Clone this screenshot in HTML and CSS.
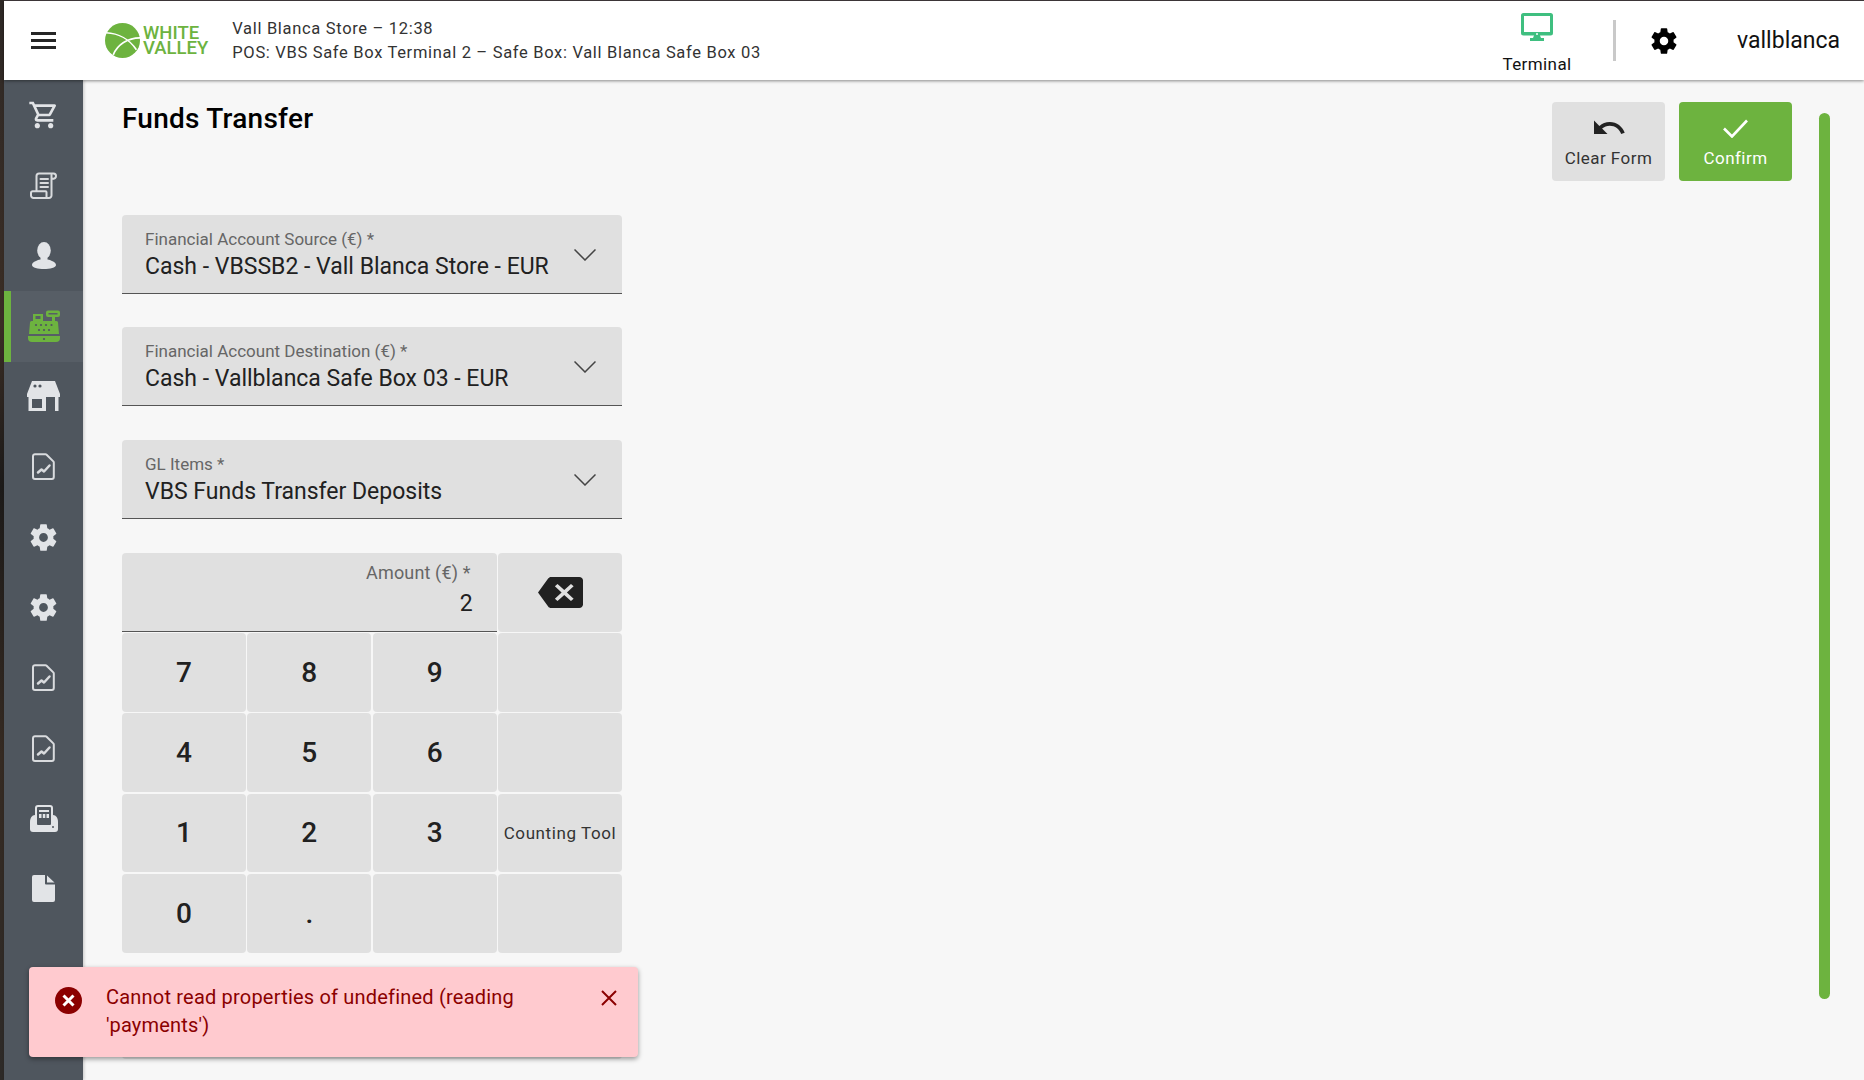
FILE: index.html
```html
<!DOCTYPE html>
<html lang="en">
<head>
<meta charset="utf-8">
<title>Funds Transfer</title>
<link rel="stylesheet" href="styles.css">
</head>
<body>
<svg class="defs" aria-hidden="true">
  <symbol id="i-cart" viewBox="0 0 24 24"><path d="M15.55 13c.75 0 1.41-.41 1.75-1.03l3.58-6.49A.996.996 0 0 0 20.01 4H5.21l-.94-2H1v2h2l3.6 7.59-1.35 2.44C4.52 15.37 5.48 17 7 17h12v-2H7l1.1-2h7.45zM6.16 6h12.15l-2.76 5H8.53L6.16 6zM7 18c-1.1 0-1.99.9-1.99 2S5.9 22 7 22s2-.9 2-2-.9-2-2-2zm10 0c-1.1 0-1.99.9-1.99 2s.89 2 1.99 2 2-.9 2-2-.9-2-2-2z"/></symbol>
  <symbol id="i-gear" viewBox="0 0 24 24"><path d="M19.14 12.94c.04-.3.06-.61.06-.94 0-.32-.02-.64-.07-.94l2.03-1.58a.49.49 0 0 0 .12-.61l-1.92-3.32a.488.488 0 0 0-.59-.22l-2.39.96c-.5-.38-1.03-.7-1.62-.94l-.36-2.54a.484.484 0 0 0-.48-.41h-3.84c-.24 0-.43.17-.47.41l-.36 2.54c-.59.24-1.13.57-1.62.94l-2.39-.96c-.22-.08-.47 0-.59.22L2.74 8.87c-.12.21-.08.47.12.61l2.03 1.58c-.05.3-.09.63-.09.94s.02.64.07.94l-2.03 1.58a.49.49 0 0 0-.12.61l1.92 3.32c.12.22.37.29.59.22l2.39-.96c.5.38 1.03.7 1.62.94l.36 2.54c.05.24.24.41.48.41h3.84c.24 0 .44-.17.47-.41l.36-2.54c.59-.24 1.13-.56 1.62-.94l2.39.96c.22.08.47 0 .59-.22l1.92-3.32c.12-.22.07-.47-.12-.61l-2.01-1.58zM12 15.2c-1.76 0-3.2-1.44-3.2-3.2s1.44-3.2 3.2-3.2 3.2 1.44 3.2 3.2-1.44 3.2-3.2 3.2z"/></symbol>
  <symbol id="i-doc" viewBox="0 0 23 27"><path class="ln" d="M3 1.200h10.500c.4 0 .8.2 1.100.5l6.700 6.700c.3.3.5.7.5 1.100V24a2 2 0 0 1-2 2H3a2 2 0 0 1-2-2V3.200a2 2 0 0 1 2-2z"/><path class="ln chart" d="M6 19.500l3.500-3 2.500 2 5.500-6"/></symbol>
  <symbol id="i-scroll" viewBox="0 0 27 27"><path class="ln" d="M6.5 19V4a2.5 2.5 0 0 1 2.5-2.5h14.5a2.6 2.6 0 0 1 2.5 2.6c0 1.700-1.100 2.900-4.500 2.900M21.500 3v20.500a2.500 2.500 0 0 1-2.500 2.500H3.500A2.500 2.500 0 0 1 1 23.500V21a1.700 1.700 0 0 1 1.700-1.700H15.500a1 1 0 0 1 1 1V25M10.500 7H18M10.500 11H18M10.500 15H18"/></symbol>
  <symbol id="i-person" viewBox="0 0 24 27"><ellipse cx="12" cy="8.500" rx="6.800" ry="8.500"/><path d="M8.500 15h7v2.500c4 .8 8.500 2.800 8.500 5.500 0 2.800-6 4-12 4S0 25.800 0 23c0-2.700 4.500-4.700 8.500-5.500z"/></symbol>
  <symbol id="i-register" viewBox="0 0 32 32"><path fill-rule="evenodd" d="M5 4h10v7H5zM7.500 6v3h5V6z"/><path fill-rule="evenodd" d="M20 .5h10a2 2 0 0 1 2 2V5a2 2 0 0 1-2 2h-3v4h-3V7h-4a2 2 0 0 1-2-2V2.500a2 2 0 0 1 2-2zm.500 2.500v1.500h9V3z"/><path d="M3.500 11h25a1.500 1.500 0 0 1 1.500 1.500l1 11.500H1l1-11.500A1.500 1.500 0 0 1 3.500 11z"/><path d="M0 26h32v2a4 4 0 0 1-4 4H4a4 4 0 0 1-4-4z"/><g class="holes"><circle cx="8" cy="15" r="1.100"/><circle cx="13" cy="15" r="1.100"/><circle cx="18" cy="15" r="1.100"/><circle cx="23.500" cy="15" r="1.100"/><circle cx="11" cy="20" r="1.100"/><circle cx="16" cy="20" r="1.100"/><circle cx="21" cy="20" r="1.100"/><circle cx="16" cy="29" r="1.100"/></g></symbol>
  <symbol id="i-store" viewBox="0 0 33 30"><path d="M5 0h23l5 13v3H0v-3z"/><path fill-rule="evenodd" d="M1.500 16H19v14H1.500zM5 18v9h10v-9z"/><path d="M28 16h3.500v14H28z"/><g class="holes"><circle cx="8" cy="5" r="1.600"/><circle cx="13" cy="5" r="1.600"/></g></symbol>
  <symbol id="i-fax" viewBox="0 0 28 27"><path d="M5 10h18c3 0 5 3 5 7v7a3 3 0 0 1-3 3H3a3 3 0 0 1-3-3v-7c0-4 2-7 5-7z"/><rect class="sheet" x="6" y="1" width="16" height="20" rx="2"/><path d="M9 5h10v2H9zM9 9h2.500v4H9zM12.800 9h2.500v4h-2.500zM16.500 9H19v4h-2.500z"/><circle class="holes" cx="23" cy="22" r="1"/></symbol>
  <symbol id="i-file" viewBox="0 0 23 27"><path d="M2 0h11v8.500a1 1 0 0 0 1 1h9V25a2 2 0 0 1-2 2H2a2 2 0 0 1-2-2V2a2 2 0 0 1 2-2z"/><path d="M15 .5L22.500 7.500H15z"/></symbol>
  <symbol id="i-chev" viewBox="0 0 22 12"><path d="M.5.5L11 11 21.500.5"/></symbol>
</svg>

<div class="wallpaper"></div>
<div class="app">
  <header class="topbar">
    <button class="menu" aria-label="Menu"><span></span><span></span><span></span></button>
    <div class="logo">
      <svg class="logo-mark" viewBox="0 0 34 34"><circle cx="17" cy="17" r="17"/><path d="M1 9.500C13 10 24 16 30.500 26M34 14.500C22 14.500 12 21 8 31"/></svg>
      <div class="logo-text"><span>WHITE</span><span>VALLEY</span></div>
    </div>
    <div class="store-info">
      <div>Vall Blanca Store – 12:38</div>
      <div>POS: VBS Safe Box Terminal 2 – Safe Box: Vall Blanca Safe Box 03</div>
    </div>
    <div class="top-right">
      <div class="terminal">
        <svg class="terminal-icon" viewBox="0 0 32 28"><path fill-rule="evenodd" d="M2.500 0h27A2.500 2.500 0 0 1 32 2.500V20a2.500 2.500 0 0 1-2.500 2.500H19l1 2.500h3v3H9v-3h3l1-2.500H2.500A2.500 2.500 0 0 1 0 20V2.500A2.500 2.500 0 0 1 2.500 0zM3 3v16h26V3z"/><circle cx="16" cy="21" r="1" class="dot"/></svg>
        <span>Terminal</span>
      </div>
      <div class="vsep"></div>
      <svg class="top-gear"><use href="#i-gear"/></svg>
      <div class="user">vallblanca</div>
    </div>
  </header>

  <div class="body">
    <nav class="sidebar">
      <a class="nav-item"><svg class="ic ic-cart"><use href="#i-cart"/></svg></a>
      <a class="nav-item"><svg class="ic ic-scroll"><use href="#i-scroll"/></svg></a>
      <a class="nav-item"><svg class="ic ic-person"><use href="#i-person"/></svg></a>
      <a class="nav-item active"><svg class="ic ic-register"><use href="#i-register"/></svg></a>
      <a class="nav-item"><svg class="ic ic-store"><use href="#i-store"/></svg></a>
      <a class="nav-item"><svg class="ic ic-doc"><use href="#i-doc"/></svg></a>
      <a class="nav-item"><svg class="ic ic-gear"><use href="#i-gear"/></svg></a>
      <a class="nav-item"><svg class="ic ic-gear"><use href="#i-gear"/></svg></a>
      <a class="nav-item"><svg class="ic ic-doc"><use href="#i-doc"/></svg></a>
      <a class="nav-item"><svg class="ic ic-doc"><use href="#i-doc"/></svg></a>
      <a class="nav-item"><svg class="ic ic-fax"><use href="#i-fax"/></svg></a>
      <a class="nav-item"><svg class="ic ic-file"><use href="#i-file"/></svg></a>
    </nav>

    <main class="main">
      <div class="content">
        <div class="page-head">
          <h1>Funds Transfer</h1>
          <div class="actions">
            <button class="action">
              <svg class="undo" viewBox="0 0 24 24"><path d="M12.500 8c-2.650 0-5.050.99-6.900 2.600L2 7v9h9l-3.620-3.620c1.390-1.160 3.160-1.880 5.120-1.880 3.540 0 6.550 2.310 7.600 5.500l2.370-.78C21.080 11.030 17.150 8 12.500 8z"/></svg>
              <span>Clear Form</span>
            </button>
            <button class="action primary">
              <svg class="check" viewBox="0 0 25 19"><path d="M1 9.500L9 17.500 24 1.500"/></svg>
              <span>Confirm</span>
            </button>
          </div>
        </div>

        <form class="form">
          <div class="field">
            <div class="field-text"><label>Financial Account Source (€) *</label><div class="value">Cash - VBSSB2 - Vall Blanca Store - EUR</div></div>
            <svg class="chev"><use href="#i-chev"/></svg>
          </div>
          <div class="field">
            <div class="field-text"><label>Financial Account Destination (€) *</label><div class="value">Cash - Vallblanca Safe Box 03 - EUR</div></div>
            <svg class="chev"><use href="#i-chev"/></svg>
          </div>
          <div class="field field-last">
            <div class="field-text"><label>GL Items *</label><div class="value">VBS Funds Transfer Deposits</div></div>
            <svg class="chev"><use href="#i-chev"/></svg>
          </div>

          <div class="keypad">
            <div class="amount"><label>Amount (€) *</label><div class="amount-value">2</div></div>
            <div class="key"><svg class="backspace" viewBox="0 0 24 18" preserveAspectRatio="none"><path d="M22 0H7c-.69 0-1.230.35-1.590.88L0 9l5.410 8.110c.36.53.9.89 1.590.89h15c1.100 0 2-.9 2-2V2c0-1.100-.9-2-2-2zm-3 12.590L17.590 14 14 10.410 10.410 14 9 12.590 12.590 9 9 5.410 10.410 4 14 7.590 17.590 4 19 5.410 15.410 9 19 12.590z"/></svg></div>
            <div class="key num">7</div><div class="key num">8</div><div class="key num">9</div><div class="key"></div>
            <div class="key num">4</div><div class="key num">5</div><div class="key num">6</div><div class="key"></div>
            <div class="key num">1</div><div class="key num">2</div><div class="key num">3</div><div class="key tool">Counting Tool</div>
            <div class="key num">0</div><div class="key num">.</div><div class="key"></div><div class="key"></div>
          </div>
          <div class="under-toast"></div>
        </form>
      </div>
      <div class="scrollbar"></div>
    </main>
  </div>

  <div class="toast" role="alert">
    <svg class="toast-icon" viewBox="0 0 27 27"><circle cx="13.500" cy="13.500" r="13.500"/><path d="M8.500 8.500l10 10M18.500 8.500l-10 10"/></svg>
    <div class="toast-text">Cannot read properties of undefined (reading 'payments')</div>
    <svg class="toast-close" viewBox="0 0 16 16"><path d="M1 1l14 14M15 1L1 15"/></svg>
  </div>
</div>
</body>
</html>
```
FILE: styles.css
```css
* { box-sizing: border-box; }
html, body { height: 100%; }
body {
  margin: 0;
  display: flex;
  height: 1080px;
  overflow: hidden;
  font-family: Roboto, "Liberation Sans", sans-serif;
  background: #f7f7f7;
  color: #212121;
}
.defs { width: 0; height: 0; position: absolute; }
.wallpaper { width: 4px; flex: none; background: linear-gradient(#2f2926, #3a2d25 30%, #1c1a19 45%, #352a22 70%, #2d2a28); }
.app { flex: 1; min-width: 0; display: flex; flex-direction: column; position: relative; border-top: 1px solid #403a3c; }

/* Top bar */
.topbar {
  height: 79px; flex: none; display: flex; align-items: center;
  background: #fff; box-shadow: 0 1px 3px rgba(0,0,0,.45);
  position: relative; z-index: 2;
}
.menu {
  width: 25px; height: 17px; margin-left: 27px; padding: 0; border: 0; background: none;
  display: flex; flex-direction: column; justify-content: space-between;
}
.menu span { display: block; height: 3px; background: #262626; }
.logo { display: flex; align-items: center; margin-left: 49px; }
.logo-mark { width: 35px; height: 35px; display: block; }
.logo-mark circle { fill: #6db33f; }
.logo-mark path { fill: none; stroke: #fff; stroke-width: 1.6; }
.logo-text {
  display: flex; flex-direction: column; margin-left: 3px;
  font-size: 18.500px; line-height: 15px; font-weight: 500; color: #6db33f;
}
.store-info { margin-left: 24px; font-size: 16.500px; line-height: 24px; letter-spacing: .68px; color: #333; }
.top-right { margin-left: auto; display: flex; align-items: center; height: 100%; }
.terminal { width: 90px; margin-right: 31px; display: flex; flex-direction: column; align-items: center; padding-top: 12px; height: 100%; font-size: 17px; letter-spacing: .4px; color: #111; }
.terminal span { margin-top: 13px; line-height: 20px; }
.terminal-icon { width: 32px; height: 28px; fill: #3fbf80; }
.terminal-icon .dot { fill: #fff; }
.vsep { width: 3px; height: 41px; background: #c9c9c9; }
.top-gear { width: 32px; height: 32px; fill: #000; margin-left: 32px; }
.user { margin-left: 57px; margin-right: 24px; font-size: 23px; color: #111; }

/* Sidebar */
.body { flex: 1; min-height: 0; display: flex; }
.sidebar { width: 79px; flex: none; background: #4f565e; box-shadow: 1px 0 3px rgba(0,0,0,.2); position: relative; z-index: 1; display: flex; flex-direction: column; }
.nav-item { height: 70.4px; flex: none; display: flex; align-items: center; justify-content: center; border-left: 7px solid transparent; padding: 0 7px 1px 0; }
.nav-item.active { background: #575e66; border-left-color: #6db33f; }
.ic { display: block; fill: #e2e4e7; }
.ic-cart { width: 32px; height: 32px; }
.ic-scroll { width: 27px; height: 27px; }
.ic-person { width: 24px; height: 27px; }
.ic-register { width: 32px; height: 32px; fill: #6db33f; }
.ic-store { width: 33px; height: 30px; }
.ic-doc { width: 23px; height: 27px; }
.ic-gear { width: 33px; height: 33px; }
.ic-fax { width: 28px; height: 27px; }
.ic-file { width: 23px; height: 27px; }
.ln { fill: none; stroke: #d9dbde; stroke-width: 2; stroke-linejoin: round; stroke-linecap: round; }
.chart { stroke-width: 2.500; }
.holes { fill: #4f565e; }
.sheet { fill: #4f565e; stroke: #e2e4e7; stroke-width: 2; }

/* Main */
.main { flex: 1; min-width: 0; display: flex; background: #f7f7f7; }
.content { flex: 1; min-width: 0; padding: 22px 27px 0 39px; }
.scrollbar { width: 11px; height: 886px; margin: 33px 34px 0 0; border-radius: 6px; background: #6db33f; flex: none; }
.page-head { display: flex; justify-content: space-between; align-items: flex-start; }
h1 { margin: 1px 0 0; font-size: 28px; line-height: 32px; font-weight: 500; letter-spacing: .25px; color: #000; }
.actions { display: flex; gap: 14px; }
.action {
  width: 113px; height: 79px; padding: 0; border: 0; border-radius: 4px; background: #e0e0e0;
  display: flex; flex-direction: column; align-items: center; justify-content: flex-start;
  font: 400 17px Roboto, sans-serif; letter-spacing: .45px; color: #333;
}
.action span { line-height: 20px; }
.undo { width: 36px; height: 36px; fill: #222; margin-top: 8px; margin-bottom: 2px; }
.action.primary { background: #6db33f; color: #fff; }
.check { width: 25px; height: 19px; margin-top: 17px; margin-bottom: 10px; fill: none; stroke: #fff; stroke-width: 2.6; }

/* Form */
.form { width: 500px; margin-top: 34px; display: flex; flex-direction: column; gap: 33px; }
.field {
  height: 79px; background: #e0e0e0; border-bottom: 1px solid #555; border-radius: 4px 4px 0 0;
  display: flex; align-items: center; justify-content: space-between; padding: 0 26px 0 23px;
}
.field-last { margin-top: 1px; }
.field-text { align-self: flex-start; padding-top: 14px; }
label { display: block; font-size: 17px; line-height: 20px; color: #666; }
.value { font-size: 23px; line-height: 28px; margin-top: 4px; color: #212121; }
.chev { width: 22px; height: 12px; margin-top: 1px; fill: none; stroke: #444; stroke-width: 1.500; }

.keypad { margin-top: 1px; display: grid; grid-template-columns: repeat(4, 1fr); grid-auto-rows: 78.800px; gap: 1.400px; }
.amount { grid-column: 1 / span 3; background: #e0e0e0; border-bottom: 1px solid #555; border-radius: 4px 4px 0 0; text-align: right; padding: 10px 24px 0 0; }
.amount label { font-size: 18px; margin-right: 2px; letter-spacing: .15px; }
.amount-value { font-size: 23px; line-height: 28px; margin-top: 7px; }
.key { background: #e0e0e0; border-radius: 4px; display: flex; align-items: center; justify-content: center; }
.num { font-size: 28px; font-weight: 500; color: #212121; }
.tool { font-size: 17px; letter-spacing: .6px; color: #333; white-space: nowrap; }
.backspace { width: 45px; height: 31px; fill: #212121; }
.under-toast { height: 91px; margin-top: -17.600px; background: #e0e0e0; border-radius: 4px; }

/* Toast */
.toast {
  position: absolute; left: 25px; bottom: 23px; width: 609px; height: 90px; z-index: 3;
  background: #ffcacf; border-radius: 4px; box-shadow: 0 2px 5px rgba(0,0,0,.4);
  display: flex; align-items: flex-start; color: #8b0000;
}
.toast-icon { width: 27px; height: 27px; flex: none; margin: 20px 0 0 26px; }
.toast-icon circle { fill: #8b0000; }
.toast-icon path { stroke: #fff; stroke-width: 3; fill: none; }
.toast-text { width: 440px; margin: 16px 0 0 24px; font-size: 20px; line-height: 28px; letter-spacing: .2px; }
.toast-close { width: 16px; height: 16px; flex: none; margin: 23px 21px 0 auto; fill: none; stroke: #8b0000; stroke-width: 2; }
```
